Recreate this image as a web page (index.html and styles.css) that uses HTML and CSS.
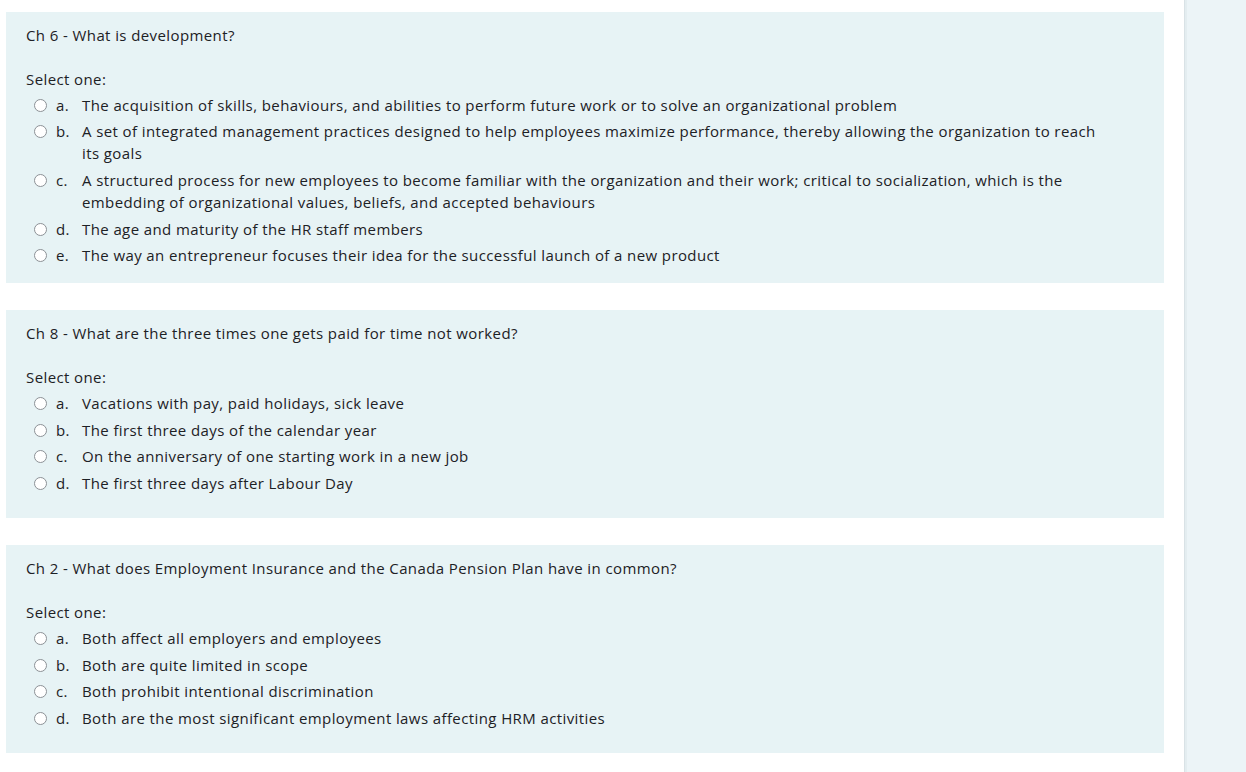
FILE: index.html
```html
<!DOCTYPE html>
<html lang="en">
<head>
<meta charset="utf-8">
<title>Quiz</title>
<link rel="stylesheet" href="styles.css">
</head>
<body>
<div class="page">
  <main class="questions">
    <section class="question question--first">
      <div class="qtext">Ch 6 - What is development?</div>
      <div class="prompt">Select one:</div>
      <div class="answers">
        <label class="option"><span class="radio"></span><span class="letter">a.</span><span class="text">The acquisition of skills, behaviours, and abilities to perform future work or to solve an organizational problem</span></label>
        <label class="option"><span class="radio"></span><span class="letter">b.</span><span class="text">A set of integrated management practices designed to help employees maximize performance, thereby allowing the organization to reach its goals</span></label>
        <label class="option"><span class="radio"></span><span class="letter">c.</span><span class="text">A structured process for new employees to become familiar with the organization and their work; critical to socialization, which is the embedding of organizational values, beliefs, and accepted behaviours</span></label>
        <label class="option"><span class="radio"></span><span class="letter">d.</span><span class="text">The age and maturity of the HR staff members</span></label>
        <label class="option"><span class="radio"></span><span class="letter">e.</span><span class="text">The way an entrepreneur focuses their idea for the successful launch of a new product</span></label>
      </div>
    </section>

    <section class="question">
      <div class="qtext">Ch 8 - What are the three times one gets paid for time not worked?</div>
      <div class="prompt">Select one:</div>
      <div class="answers">
        <label class="option"><span class="radio"></span><span class="letter">a.</span><span class="text">Vacations with pay, paid holidays, sick leave</span></label>
        <label class="option"><span class="radio"></span><span class="letter">b.</span><span class="text">The first three days of the calendar year</span></label>
        <label class="option"><span class="radio"></span><span class="letter">c.</span><span class="text">On the anniversary of one starting work in a new job</span></label>
        <label class="option"><span class="radio"></span><span class="letter">d.</span><span class="text">The first three days after Labour Day</span></label>
      </div>
    </section>

    <section class="question">
      <div class="qtext">Ch 2 - What does Employment Insurance and the Canada Pension Plan have in common?</div>
      <div class="prompt">Select one:</div>
      <div class="answers">
        <label class="option"><span class="radio"></span><span class="letter">a.</span><span class="text">Both affect all employers and employees</span></label>
        <label class="option"><span class="radio"></span><span class="letter">b.</span><span class="text">Both are quite limited in scope</span></label>
        <label class="option"><span class="radio"></span><span class="letter">c.</span><span class="text">Both prohibit intentional discrimination</span></label>
        <label class="option"><span class="radio"></span><span class="letter">d.</span><span class="text">Both are the most significant employment laws affecting HRM activities</span></label>
      </div>
    </section>
  </main>
  <aside class="drawer"></aside>
</div>
</body>
</html>
```

FILE: styles.css
```css
* { box-sizing: border-box; }

html, body {
  margin: 0;
  padding: 0;
  background: #ffffff;
  height: 100%;
}

body {
  font-family: "Open Sans", "Liberation Sans", sans-serif;
  font-size: 15px;
  letter-spacing: 0.4px;
  line-height: 22px;
  color: #1d2125;
  overflow: hidden;
}

.page {
  display: flex;
  height: 772px;
}

.questions {
  width: 1184px;
  flex: none;
  padding: 12px 20px 0 6px;
  display: flex;
  flex-direction: column;
  gap: 27px;
}

.question {
  background: #e7f3f5;
  padding: 12px 50px 22px 20px;
}

.question--first {
  padding-bottom: 15px;
}

.qtext {
  margin-bottom: 22px;
}

.prompt {
  margin-bottom: 1.5px;
}

.answers {
  display: flex;
  flex-direction: column;
}

.option {
  display: flex;
  align-items: flex-start;
  padding: 2.3px 0;
}

.radio {
  flex: none;
  width: 13px;
  height: 13px;
  margin: 5px 9px 0 8px;
  border: 1px solid #8c9196;
  border-radius: 50%;
  background: #ffffff;
}

.letter {
  flex: none;
  width: 26px;
}

.text {
  flex: 1;
}

.drawer {
  flex: 1;
  background: #ecf4f7;
  border-left: 1px solid #d9e2e6;
  box-shadow: inset 2px 0 0 #e4edf0;
}
```
